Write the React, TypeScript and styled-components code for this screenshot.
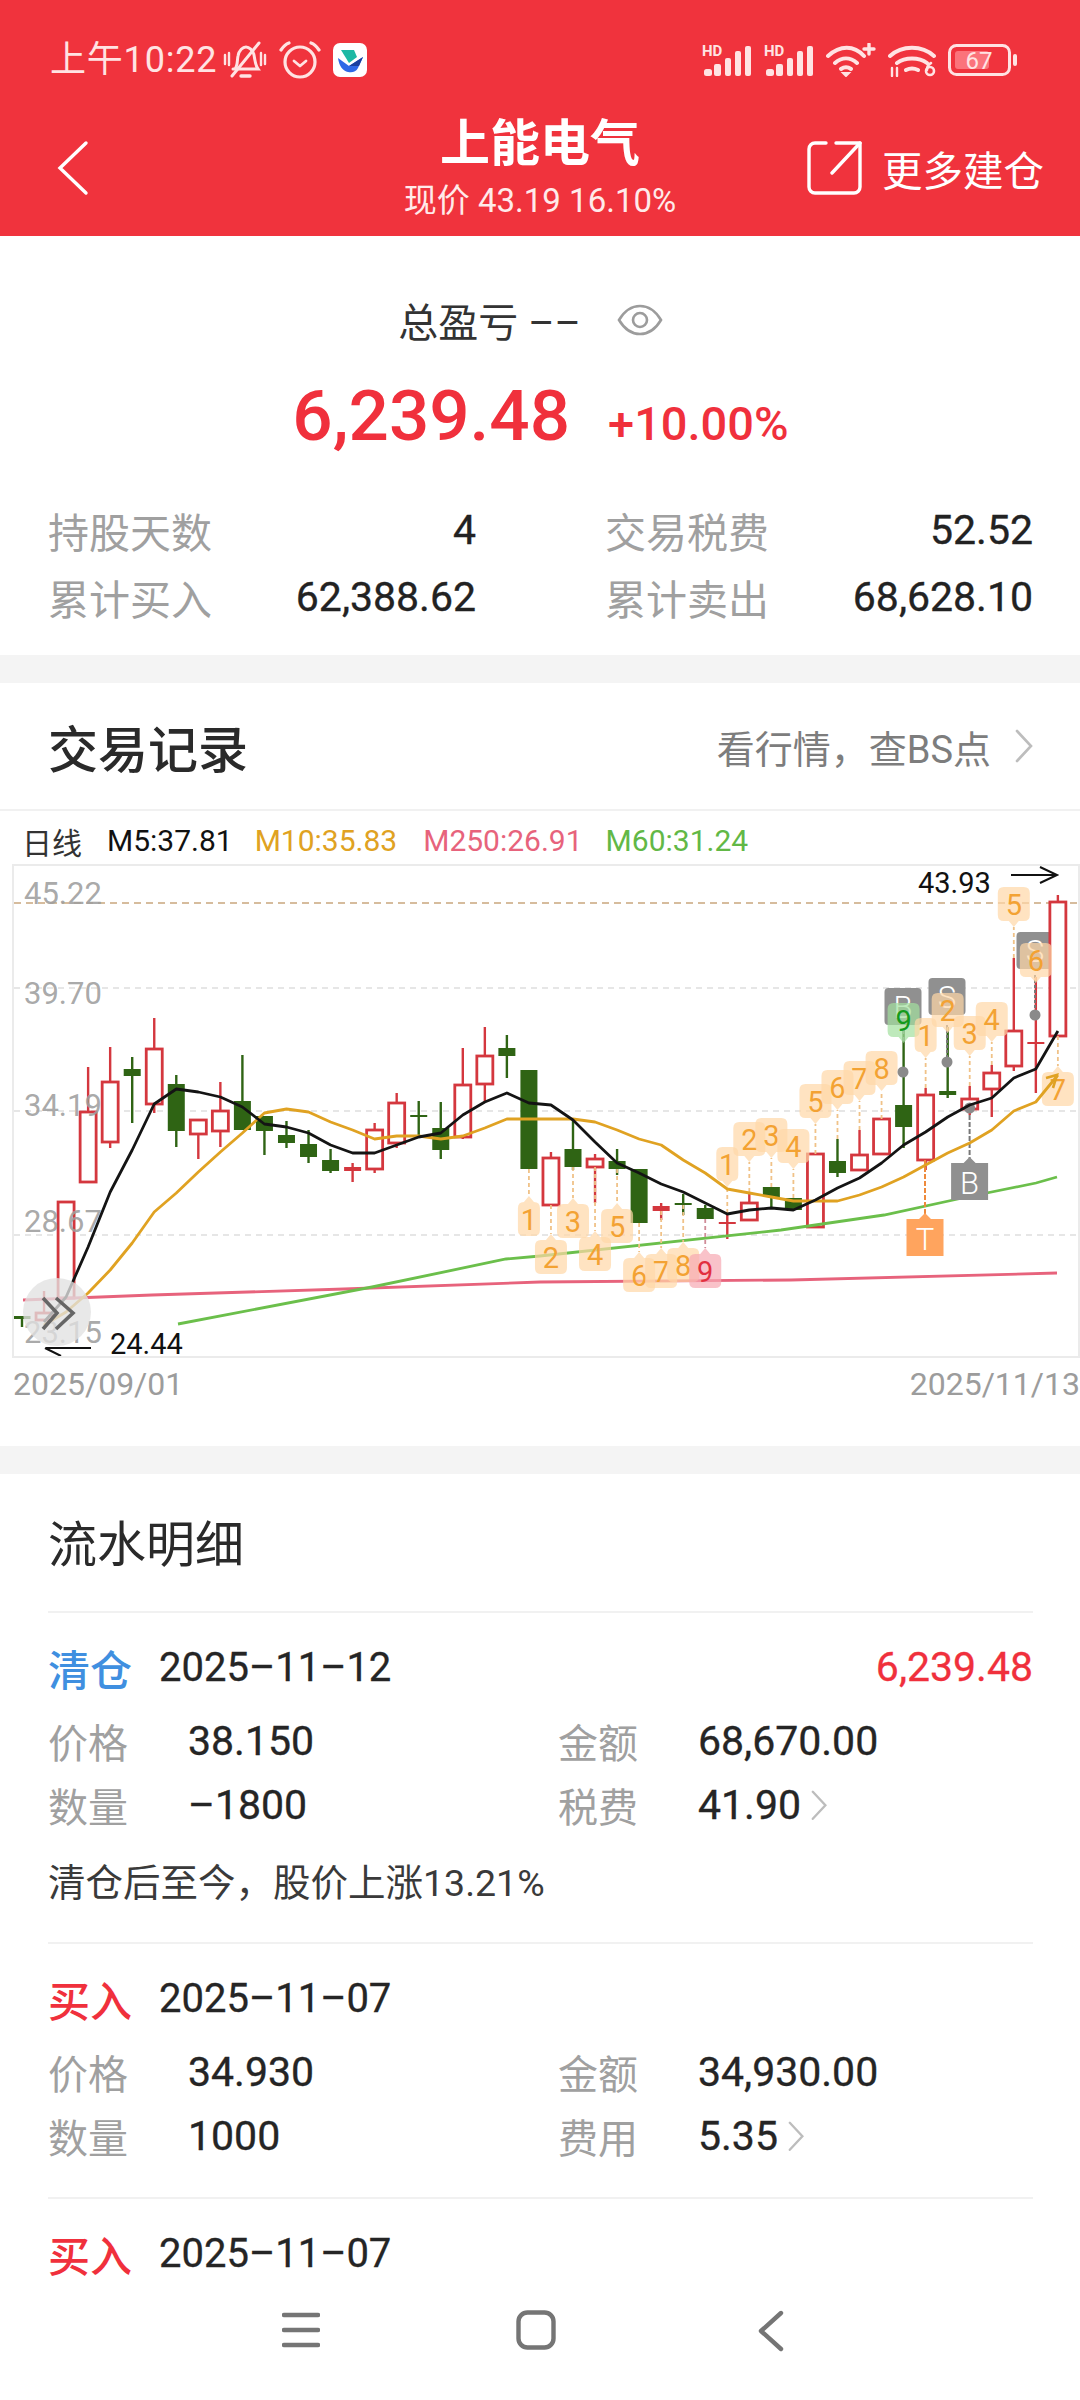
import styled, { createGlobalStyle } from "styled-components";

const GlobalStyle = createGlobalStyle`
  html, body {
    margin: 0;
    padding: 0;
    background: #fff;
  }
  body {
    font-family: Roboto, "Noto Sans CJK SC", sans-serif;
    color: #222;
  }
`;

const RED = "#f0303c";
const ICON = "#ffe3e3";

const Screen = styled.div`
  width: 1080px;
  height: 2400px;
  display: flex;
  flex-direction: column;
  overflow: hidden;
  background: #fff;
`;

const Scroll = styled.div`
  flex: 1;
  min-height: 0;
  overflow: hidden;
`;

const Header = styled.header`
  height: 236px;
  background: #f0333d;
  color: #fff;
`;

const StatusBar = styled.div`
  height: 80px;
  padding: 20px 62px 0 50px;
  display: flex;
  align-items: center;
  justify-content: space-between;
`;

const StatusGroup = styled.div<{ $gap?: number }>`
  display: flex;
  align-items: center;
  gap: ${(p) => p.$gap ?? 12}px;
`;

const Clock = styled.span`
  font-size: 36px;
  line-height: 40px;
  color: ${ICON};
  margin-right: -6px;
  letter-spacing: 0.8px;
`;

const TopNav = styled.div`
  height: 136px;
  display: grid;
  grid-template-columns: 1fr auto 1fr;
  align-items: center;
`;

const BackBox = styled.div`
  padding-left: 56px;
  display: flex;
`;

const TitleBlock = styled.div`
  text-align: center;
`;

const Title = styled.div`
  font-size: 50px;
  line-height: 58px;
  font-weight: 700;
`;

const SubTitle = styled.div`
  font-size: 33px;
  line-height: 40px;
  margin-top: 8px;
  color: #ffeaea;
`;

const MoreAction = styled.div`
  display: flex;
  justify-content: flex-end;
  align-items: center;
  gap: 20px;
  padding-right: 36px;
  font-size: 40.5px;
`;

const Summary = styled.section`
  padding: 59px 47px 25px 48px;
`;

const ProfitLine = styled.div`
  height: 50px;
  padding-right: 20px;
  display: flex;
  align-items: center;
  justify-content: center;
  gap: 36px;
  font-size: 40px;
  color: #333;
`;

const AmountLine = styled.div`
  margin-top: 35px;
  height: 72px;
  display: flex;
  align-items: baseline;
  justify-content: center;
  gap: 38px;
  color: ${RED};
`;

const Amount = styled.span`
  font-size: 71px;
  line-height: 72px;
  font-weight: 500;
`;

const Percent = styled.span`
  font-size: 47px;
  line-height: 72px;
  font-weight: 500;
`;

const StatGrid = styled.div`
  margin-top: 44px;
  display: grid;
  grid-template-columns: 428px 428px;
  column-gap: 129px;
  grid-auto-rows: 67px;
`;

const Stat = styled.div`
  display: flex;
  align-items: center;
  justify-content: space-between;
`;

const StatLabel = styled.span`
  font-size: 41px;
  color: #a0a0a0;
`;

const StatValue = styled.span`
  font-size: 41px;
  color: #222;
  -webkit-text-stroke: 0.35px #222;
`;

const Band = styled.div`
  height: 28px;
  background: #f4f4f4;
`;

const SectionHead = styled.div`
  height: 126px;
  padding: 0 47px 0 48px;
  display: flex;
  align-items: center;
  justify-content: space-between;
  border-bottom: 2px solid #f1f1f1;
`;

const SectionTitle = styled.h2`
  margin: 0;
  font-size: 50px;
  font-weight: 500;
  color: #2a2a2a;
`;

const SectionLink = styled.div`
  display: flex;
  align-items: center;
  gap: 24px;
  font-size: 38px;
  color: #7d7d7d;
`;

const Legend = styled.div`
  height: 47px;
  padding: 6px 0 0 22px;
  display: flex;
  align-items: center;
  font-size: 30px;
`;

const LegendItem = styled.span<{ $color: string; $gap: number }>`
  color: ${(p) => p.$color};
  margin-right: ${(p) => p.$gap}px;
`;

const ChartFrame = styled.div`
  width: 1064px;
  height: 490px;
  margin-left: 12px;
  border: 2px solid #ebebeb;
  overflow: hidden;
`;

const ChartSvg = styled.svg`
  display: block;
`;

const DateAxis = styled.div`
  height: 87px;
  padding: 1px 0 0 13px;
  display: flex;
  justify-content: space-between;
  font-size: 32px;
  line-height: 50px;
  color: #9c9c9c;
`;

const DetailHead = styled.div`
  margin: 0 47px 0 48px;
  height: 132px;
  padding-bottom: 5px;
  display: flex;
  align-items: center;
  border-bottom: 2px solid #f1f1f1;
`;

const DetailTitle = styled.h2`
  margin: 0;
  font-size: 49px;
  font-weight: 400;
  color: #2a2a2a;
`;

const Record = styled.div<{ $last?: boolean }>`
  margin: 0 47px 0 48px;
  padding: 29px 0 ${(p) => (p.$last ? 0 : 29)}px;
  border-bottom: ${(p) => (p.$last ? "none" : "2px solid #f1f1f1")};
`;

const RecordHead = styled.div`
  height: 50px;
  display: flex;
  align-items: center;
`;

const RecordType = styled.span<{ $color: string }>`
  width: 111px;
  font-size: 42px;
  font-weight: 500;
  color: ${(p) => p.$color};
`;

const RecordDate = styled.span`
  font-size: 40px;
  color: #252525;
  -webkit-text-stroke: 0.3px #252525;
`;

const RecordProfit = styled.span`
  margin-left: auto;
  font-size: 41px;
  color: ${RED};
  -webkit-text-stroke: 0.3px ${RED};
`;

const RecordRows = styled.div`
  margin-top: 17px;
  display: grid;
  grid-template-columns: 140px 370px 140px 1fr;
  grid-auto-rows: 64px;
  align-items: center;
`;

const RecordLabel = styled.span`
  font-size: 40px;
  color: #a0a0a0;
`;

const RecordValue = styled.span`
  display: flex;
  align-items: center;
  gap: 10px;
  font-size: 41px;
  color: #252525;
  -webkit-text-stroke: 0.35px #252525;
`;

const RecordNote = styled.div`
  margin: 21px 0 5px;
  font-size: 37.5px;
  line-height: 50px;
  color: #3a3a3a;
`;

const BottomNav = styled.nav`
  box-sizing: border-box;
  height: 115px;
  flex: none;
  background: #fff;
  padding: 25px 8px 0 0;
  display: flex;
  justify-content: center;
  align-items: flex-start;
`;

const NavSlot = styled.div`
  width: 235px;
  height: 40px;
  display: flex;
  justify-content: center;
`;

type Candle = [number, number, number, number, "r" | "g"];

// wick top, body top, body bottom, wick bottom, colour, one per trading day
const CANDLES: Candle[] = [
  [1316, 1316, 1319, 1327, "g"],
  [1291, 1313, 1320, 1320, "r"],
  [1202, 1202, 1298, 1298, "r"],
  [1067, 1112, 1182, 1182, "r"],
  [1047, 1082, 1142, 1148, "r"],
  [1057, 1069, 1076, 1123, "g"],
  [1018, 1049, 1104, 1113, "r"],
  [1075, 1084, 1131, 1147, "g"],
  [1120, 1120, 1134, 1159, "r"],
  [1082, 1111, 1131, 1147, "r"],
  [1055, 1101, 1130, 1130, "g"],
  [1116, 1116, 1131, 1155, "g"],
  [1121, 1135, 1143, 1148, "g"],
  [1130, 1144, 1157, 1163, "g"],
  [1149, 1160, 1171, 1173, "g"],
  [1163, 1167, 1171, 1182, "r"],
  [1123, 1130, 1169, 1173, "r"],
  [1093, 1103, 1143, 1148, "r"],
  [1101, 1115, 1117, 1138, "g"],
  [1102, 1128, 1150, 1159, "g"],
  [1048, 1085, 1137, 1139, "r"],
  [1027, 1056, 1084, 1103, "r"],
  [1035, 1048, 1056, 1078, "g"],
  [1070, 1070, 1169, 1169, "g"],
  [1152, 1158, 1205, 1205, "r"],
  [1118, 1149, 1167, 1170, "g"],
  [1154, 1159, 1167, 1203, "r"],
  [1149, 1161, 1169, 1175, "g"],
  [1169, 1169, 1223, 1223, "g"],
  [1203, 1206, 1211, 1220, "r"],
  [1194, 1203, 1205, 1215, "g"],
  [1205, 1208, 1219, 1219, "g"],
  [1213, 1222, 1224, 1239, "r"],
  [1192, 1203, 1220, 1220, "r"],
  [1187, 1187, 1197, 1208, "g"],
  [1198, 1198, 1210, 1210, "g"],
  [1154, 1154, 1227, 1227, "r"],
  [1139, 1161, 1173, 1177, "g"],
  [1130, 1155, 1170, 1170, "r"],
  [1119, 1119, 1154, 1154, "r"],
  [1030, 1105, 1127, 1148, "g"],
  [1088, 1095, 1160, 1170, "r"],
  [1027, 1091, 1095, 1098, "g"],
  [1086, 1099, 1109, 1115, "r"],
  [1065, 1073, 1089, 1117, "r"],
  [958, 1031, 1066, 1071, "r"],
  [977, 1042, 1044, 1093, "r"],
  [895, 902, 1036, 1036, "r"],
];

const MA5 = [
  1322, 1297, 1247, 1192, 1150, 1104, 1089, 1092, 1097, 1107, 1124, 1127, 1133, 1145, 1153, 1153, 1145,
  1137, 1133, 1115, 1102, 1093, 1103, 1105, 1120, 1142, 1163, 1173, 1184, 1192, 1203, 1214, 1210, 1208,
  1210, 1200, 1188, 1178, 1163, 1145, 1132, 1117, 1105, 1098, 1078, 1069, 1031,
];

const MA10 = [
  1325, 1312, 1293, 1270, 1243, 1212, 1193, 1172, 1152, 1133, 1113, 1109, 1112, 1122, 1130, 1139, 1136,
  1136, 1139, 1136, 1128, 1119, 1119, 1119, 1119, 1122, 1130, 1139, 1145, 1160, 1173, 1189, 1193, 1197,
  1201, 1201, 1201, 1195, 1187, 1177, 1165, 1153, 1143, 1130, 1111, 1102, 1075,
];

const slotX = (i: number) => 22 + 22.04 * i;
const toLine = (ys: number[]) => ys.map((y, i) => `${slotX(i + 1).toFixed(1)},${y}`).join(" ");

const MA250 = "23,1300 152,1295 344,1289 540,1282 791,1280 1057,1273";
const MA60 = "178,1324 372,1287 506,1259 540,1256 781,1230 884,1215 967,1197 1036,1183 1057,1177";

type Pin = { slot: number; y: number; label: string; up?: boolean; narrow?: boolean; tone?: "green" | "red" };

const PINS: Pin[] = [
  { slot: 23, y: 1219, label: "1", up: true, narrow: true },
  { slot: 24, y: 1257, label: "2", up: true },
  { slot: 25, y: 1221, label: "3", up: true },
  { slot: 26, y: 1254, label: "4", up: true },
  { slot: 27, y: 1226, label: "5", up: true },
  { slot: 28, y: 1275, label: "6", up: true },
  { slot: 29, y: 1271, label: "7", up: true },
  { slot: 30, y: 1265, label: "8", up: true },
  { slot: 31, y: 1271, label: "9", up: true, tone: "red" },
  { slot: 32, y: 1164, label: "1", narrow: true },
  { slot: 33, y: 1139, label: "2" },
  { slot: 34, y: 1135, label: "3" },
  { slot: 35, y: 1146, label: "4" },
  { slot: 36, y: 1101, label: "5" },
  { slot: 37, y: 1087, label: "6" },
  { slot: 38, y: 1078, label: "7" },
  { slot: 39, y: 1068, label: "8" },
  { slot: 40, y: 1020, label: "9", tone: "green" },
  { slot: 41, y: 1035, label: "1", narrow: true },
  { slot: 42, y: 1010, label: "2" },
  { slot: 43, y: 1033, label: "3" },
  { slot: 44, y: 1019, label: "4" },
  { slot: 45, y: 904, label: "5" },
  { slot: 46, y: 960, label: "6" },
  { slot: 47, y: 1089, label: "7", up: true },
];

const PIN_TONES = {
  orange: { fill: "#ffd7a6", text: "#f3a233", line: "#f0c288" },
  green: { fill: "#a3e09e", text: "#149a1c", line: "#8a8a8a" },
  red: { fill: "#f6a8b2", text: "#e2303f", line: "#cf8c98" },
};

const pinPath = (x: number, y: number, w: number, up?: boolean) => {
  const l = x - w / 2;
  const r = x + w / 2;
  const t = y - 17;
  const b = y + 17;
  return up
    ? `M${l + 6} ${t}L${x - 5} ${t}L${x} ${t - 6}L${x + 5} ${t}L${r - 6} ${t}Q${r} ${t} ${r} ${t + 6}L${r} ${b - 6}Q${r} ${b} ${r - 6} ${b}L${l + 6} ${b}Q${l} ${b} ${l} ${b - 6}L${l} ${t + 6}Q${l} ${t} ${l + 6} ${t}Z`
    : `M${l + 6} ${t}L${r - 6} ${t}Q${r} ${t} ${r} ${t + 6}L${r} ${b - 6}Q${r} ${b} ${r - 6} ${b}L${x + 5} ${b}L${x} ${b + 6}L${x - 5} ${b}L${l + 6} ${b}Q${l} ${b} ${l} ${b - 6}L${l} ${t + 6}Q${l} ${t} ${l + 6} ${t}Z`;
};

function CandleMark({ candle, slot }: { candle: Candle; slot: number }) {
  const [high, top, bottom, low, kind] = candle;
  const x = slotX(slot);
  const color = kind === "r" ? "#d4373e" : "#2f6414";
  const thin = bottom - top < 6;
  return (
    <g>
      <line x1={x} x2={x} y1={high} y2={low} stroke={color} strokeWidth={2.4} />
      {kind === "g" || thin ? (
        <rect x={x - 8.5} y={top} width={17} height={bottom - top} fill={color} />
      ) : (
        <rect x={x - 8} y={top} width={16} height={bottom - top} fill="#fff" stroke={color} strokeWidth={2.8} />
      )}
    </g>
  );
}

function PinMark({ pin }: { pin: Pin }) {
  const x = slotX(pin.slot);
  const tone = PIN_TONES[pin.tone ?? "orange"];
  const candle = CANDLES[pin.slot];
  const from = pin.up ? candle[2] : candle[0];
  const to = pin.up ? pin.y - 23 : pin.y + 23;
  return (
    <g>
      <line x1={x} x2={x} y1={from} y2={to} stroke={tone.line} strokeWidth={1.8} strokeDasharray="4 3" />
      <path d={pinPath(x, pin.y, pin.narrow ? 22 : 32, pin.up)} fill={tone.fill} fillOpacity={0.7} />
      <text x={x} y={pin.y + 11} textAnchor="middle" fontSize={29} fill={tone.text} fontFamily="Roboto, sans-serif">
        {pin.label}
      </text>
    </g>
  );
}

function TagMark({ x, y, label, fill }: { x: number; y: number; label: string; fill: string }) {
  return (
    <g>
      <rect x={x - 18.5} y={y} width={37} height={37} rx={4} fill={fill} />
      <text x={x} y={y + 30} textAnchor="middle" fontSize={31} fontWeight={300} fill="#fff" fontFamily="Roboto, sans-serif">
        {label}
      </text>
    </g>
  );
}

function KLineChart() {
  const axis = [
    ["45.22", 904],
    ["39.70", 1004],
    ["34.19", 1116],
    ["28.67", 1232],
    ["23.15", 1343],
  ] as const;
  return (
    <ChartFrame>
      <ChartSvg width={1064} height={490} viewBox="14 866 1064 490">
        {[988, 1111, 1235].map((y) => (
          <line key={y} x1={14} x2={1078} y1={y} y2={y} stroke="#dedede" strokeWidth={1.5} strokeDasharray="6 5" />
        ))}
        <line x1={14} x2={1078} y1={903} y2={903} stroke="#c9a77d" strokeWidth={1.5} strokeDasharray="7 5" />

        <TagMark x={903} y={988} label="B" fill="#909090" />
        <TagMark x={947} y={978} label="S" fill="#909090" />
        <TagMark x={1035} y={932} label="S" fill="#909090" />

        {CANDLES.map((candle, i) => (
          <CandleMark key={i} candle={candle} slot={i} />
        ))}

        {axis.map(([label, y]) => (
          <text key={label} x={24} y={y} fontSize={31} fill="#9e9e9e" fillOpacity={0.9} fontFamily="Roboto, sans-serif">
            {label}
          </text>
        ))}

        <polyline points={MA250} fill="none" stroke="#e7637c" strokeWidth={2.8} />
        <polyline points={MA60} fill="none" stroke="#6bbf4b" strokeWidth={2.8} />

        <line x1={947} x2={947} y1={1025} y2={1062} stroke="#777" strokeWidth={2} strokeDasharray="3 2" />
        <line x1={1035} x2={1035} y1={975} y2={1015} stroke="#777" strokeWidth={2} strokeDasharray="3 2" />
        <line x1={969.6} x2={969.6} y1={1108} y2={1160} stroke="#777" strokeWidth={2} strokeDasharray="5 2" />
        <line x1={925} x2={925} y1={1160} y2={1216} stroke="#ee8a3c" strokeWidth={2} strokeDasharray="5 2" />

        {PINS.map((pin) => (
          <PinMark key={`${pin.slot}${pin.label}`} pin={pin} />
        ))}

        <circle cx={903} cy={1072} r={5.5} fill="#8a8a8a" />
        <circle cx={947} cy={1062} r={5.5} fill="#8a8a8a" />
        <circle cx={1035} cy={1015} r={5.5} fill="#8a8a8a" />
        <circle cx={969.6} cy={1108} r={5.5} fill="#8a8a8a" />

        <path d="M969.6 1157l6 6h12.5v37h-37v-37h12.5z" fill="#909090" />
        <text x={969.6} y={1194} textAnchor="middle" fontSize={31} fontWeight={300} fill="#fff" fontFamily="Roboto, sans-serif">
          B
        </text>
        <path d="M925 1213l6 6h12.5v37h-37v-37h12.5z" fill="#ffa45e" />
        <text x={925} y={1250} textAnchor="middle" fontSize={31} fontWeight={300} fill="#fff" fontFamily="Roboto, sans-serif">
          T
        </text>

        <polyline points={toLine(MA10)} fill="none" stroke="#e0a222" strokeWidth={2.8} strokeLinejoin="round" />
        <path d="M1046 1078L1057 1075L1053 1088" fill="none" stroke="#e0a222" strokeWidth={2.6} />
        <polyline points={toLine(MA5)} fill="none" stroke="#141414" strokeWidth={2.8} strokeLinejoin="round" />

        <text x={918} y={893} fontSize={29} fill="#111" fontFamily="Roboto, sans-serif">
          43.93
        </text>
        <path d="M1011 875H1056M1040 867L1057 875L1040 883" fill="none" stroke="#111" strokeWidth={2} />
        <text x={110} y={1354} fontSize={29} fill="#111" fontFamily="Roboto, sans-serif">
          24.44
        </text>
        <path d="M91 1348H46M61 1356L45 1348" fill="none" stroke="#111" strokeWidth={2} />

        <circle cx={57} cy={1312} r={34} fill="#e2e2e2" fillOpacity={0.78} />
        <path d="M43 1298L57 1313L43 1329M56 1298L73 1313L56 1329" fill="none" stroke="#666" strokeWidth={3.6} />
      </ChartSvg>
    </ChartFrame>
  );
}

function MutedBell() {
  return (
    <svg width={44} height={40} viewBox="0 0 44 40" fill="none" stroke={ICON} strokeWidth={3} strokeLinecap="round">
      <path d="M12 29c3-4 2-9 3-13 1-6 5-9 8-9s7 3 8 8c1 5 1 10 4 14H10" />
      <path d="M9 36L36 3" />
      <path d="M2 15v9M6 13v12M38 13v12M42 15v9" strokeWidth={2.4} />
      <path d="M18 36h9" strokeWidth={3.4} />
    </svg>
  );
}

function AlarmClock() {
  return (
    <svg width={42} height={38} viewBox="0 0 42 38" fill="none" stroke={ICON} strokeWidth={3.2} strokeLinecap="round" strokeLinejoin="round">
      <circle cx={21} cy={21} r={15} />
      <path d="M2 9c2-3 5-6 8-7M40 9c-2-3-5-6-8-7" />
      <path d="M15 20l6 5 6-5" strokeWidth={2.8} />
    </svg>
  );
}

function AppBadge() {
  return (
    <svg width={34} height={34} viewBox="0 0 34 34">
      <rect width={34} height={34} rx={7} fill="#fff" />
      <path d="M8 7h13l3 7-8 6z" fill="#1db8a4" />
      <path d="M5 15l11 8 14-9-5 11c-2 4-6 5-10 4-5-1-9-6-10-14z" fill="#2f68e6" />
      <path d="M16 23l14-9-4 9z" fill="#1b3f9e" />
    </svg>
  );
}

function SignalBars() {
  return (
    <svg width={50} height={34} viewBox="0 0 50 34" fill={ICON}>
      <text x={0} y={13} fontSize={15} fontWeight={700} fill={ICON} fontFamily="Roboto, sans-serif">
        HD
      </text>
      <rect x={2} y={26} width={8} height={7} rx={2.5} />
      <rect x={12} y={21} width={7} height={12} rx={2} />
      <rect x={23} y={15} width={6} height={18} rx={2} />
      <rect x={33} y={8} width={6} height={25} rx={2} />
      <rect x={43} y={3} width={6} height={30} rx={2} />
    </svg>
  );
}

function WifiPlus() {
  return (
    <svg width={50} height={34} viewBox="0 0 50 34" fill="none" stroke={ICON} strokeWidth={4} strokeLinecap="round">
      <path d="M2 13c12-11 26-11 36 0M9 20c7-6 15-6 22 0M15 26c3-2 7-2 10 0" />
      <path d="M20 33l-3-3h6z" fill={ICON} strokeWidth={2} />
      <path d="M38 6h10M43 1v10" strokeWidth={3.4} />
    </svg>
  );
}

function WifiSix() {
  return (
    <svg width={48} height={34} viewBox="0 0 48 34" fill="none" stroke={ICON} strokeWidth={4} strokeLinecap="round">
      <path d="M2 13c12-11 32-11 44 0M9 20c8-6 22-6 30 0M18 27c4-2 8-2 12 0" />
      <path d="M4 25v8M9 25v8" strokeWidth={2.4} />
      <circle cx={42} cy={28} r={4} strokeWidth={2.6} />
      <path d="M39 27c0-4 2-6 4-7" strokeWidth={2.6} />
    </svg>
  );
}

function Battery() {
  return (
    <svg width={70} height={32} viewBox="0 0 70 32">
      <rect x={1.5} y={1.5} width={60} height={29} rx={7} fill="none" stroke={ICON} strokeWidth={3} />
      <rect x={7} y={7} width={34} height={18} rx={3} fill="#ff8a90" fillOpacity={0.75} />
      <rect x={65} y={10} width={4} height={12} rx={2} fill={ICON} />
      <text x={31} y={25} textAnchor="middle" fontSize={24} fill={ICON} fontFamily="Roboto, sans-serif">
        67
      </text>
    </svg>
  );
}

function BackArrow() {
  return (
    <svg width={34} height={56} viewBox="0 0 34 56" fill="none" stroke="#fff" strokeWidth={3.4} strokeLinecap="round">
      <path d="M30 3L4 28L30 53" />
    </svg>
  );
}

function ShareBox() {
  return (
    <svg width={56} height={56} viewBox="806 145 56 56" fill="none" stroke="#fff" strokeWidth={3.4} strokeLinecap="round" strokeLinejoin="round">
      <path d="M826 148H815a6 6 0 0 0-6 6V192a6 6 0 0 0 6 6H854a6 6 0 0 0 6-6V148H836" />
      <path d="M860 148L832 178" />
    </svg>
  );
}

function EyeIcon() {
  return (
    <svg width={46} height={32} viewBox="0 0 46 32" fill="none" stroke="#9c9c9c" strokeWidth={2.6}>
      <path d="M2 16C8 6 15 2 23 2s15 4 21 14c-6 10-13 14-21 14S8 26 2 16z" />
      <circle cx={23} cy={16} r={7} />
    </svg>
  );
}

function Chevron({ size = 1, color = "#bdbdbd" }: { size?: number; color?: string }) {
  return (
    <svg width={18 * size} height={34 * size} viewBox="0 0 18 34" fill="none" stroke={color} strokeWidth={2.6} strokeLinecap="round">
      <path d="M2 2L16 17L2 32" />
    </svg>
  );
}

export default function App() {
  return (
    <Screen>
      <GlobalStyle />
      <Scroll>
        <Header>
          <StatusBar>
            <StatusGroup $gap={12}>
              <Clock>上午10:22</Clock>
              <MutedBell />
              <AlarmClock />
              <AppBadge />
            </StatusGroup>
            <StatusGroup>
              <SignalBars />
              <SignalBars />
              <WifiPlus />
              <WifiSix />
              <Battery />
            </StatusGroup>
          </StatusBar>
          <TopNav>
            <BackBox>
              <BackArrow />
            </BackBox>
            <TitleBlock>
              <Title>上能电气</Title>
              <SubTitle>现价 43.19 16.10%</SubTitle>
            </TitleBlock>
            <MoreAction>
              <ShareBox />
              更多建仓
            </MoreAction>
          </TopNav>
        </Header>

        <Summary>
          <ProfitLine>
            <span>总盈亏 ––</span>
            <EyeIcon />
          </ProfitLine>
          <AmountLine>
            <Amount>6,239.48</Amount>
            <Percent>+10.00%</Percent>
          </AmountLine>
          <StatGrid>
            <Stat>
              <StatLabel>持股天数</StatLabel>
              <StatValue>4</StatValue>
            </Stat>
            <Stat>
              <StatLabel>交易税费</StatLabel>
              <StatValue>52.52</StatValue>
            </Stat>
            <Stat>
              <StatLabel>累计买入</StatLabel>
              <StatValue>62,388.62</StatValue>
            </Stat>
            <Stat>
              <StatLabel>累计卖出</StatLabel>
              <StatValue>68,628.10</StatValue>
            </Stat>
          </StatGrid>
        </Summary>

        <Band />

        <SectionHead>
          <SectionTitle>交易记录</SectionTitle>
          <SectionLink>
            看行情，查BS点
            <Chevron />
          </SectionLink>
        </SectionHead>

        <Legend>
          <LegendItem $color="#333" $gap={25}>日线</LegendItem>
          <LegendItem $color="#111" $gap={22}>M5:37.81</LegendItem>
          <LegendItem $color="#e0a222" $gap={26}>M10:35.83</LegendItem>
          <LegendItem $color="#e7637c" $gap={23}>M250:26.91</LegendItem>
          <LegendItem $color="#62b846" $gap={0}>M60:31.24</LegendItem>
        </Legend>

        <KLineChart />

        <DateAxis>
          <span>2025/09/01</span>
          <span>2025/11/13</span>
        </DateAxis>

        <Band />

        <DetailHead>
          <DetailTitle>流水明细</DetailTitle>
        </DetailHead>

        <Record>
          <RecordHead>
            <RecordType $color="#3f8fe0">清仓</RecordType>
            <RecordDate>2025–11–12</RecordDate>
            <RecordProfit>6,239.48</RecordProfit>
          </RecordHead>
          <RecordRows>
            <RecordLabel>价格</RecordLabel>
            <RecordValue>38.150</RecordValue>
            <RecordLabel>金额</RecordLabel>
            <RecordValue>68,670.00</RecordValue>
            <RecordLabel>数量</RecordLabel>
            <RecordValue>–1800</RecordValue>
            <RecordLabel>税费</RecordLabel>
            <RecordValue>
              41.90
              <Chevron size={0.9} />
            </RecordValue>
          </RecordRows>
          <RecordNote>清仓后至今，股价上涨13.21%</RecordNote>
        </Record>

        <Record>
          <RecordHead>
            <RecordType $color={RED}>买入</RecordType>
            <RecordDate>2025–11–07</RecordDate>
          </RecordHead>
          <RecordRows>
            <RecordLabel>价格</RecordLabel>
            <RecordValue>34.930</RecordValue>
            <RecordLabel>金额</RecordLabel>
            <RecordValue>34,930.00</RecordValue>
            <RecordLabel>数量</RecordLabel>
            <RecordValue>1000</RecordValue>
            <RecordLabel>费用</RecordLabel>
            <RecordValue>
              5.35
              <Chevron size={0.9} />
            </RecordValue>
          </RecordRows>
        </Record>

        <Record $last>
          <RecordHead>
            <RecordType $color={RED}>买入</RecordType>
            <RecordDate>2025–11–07</RecordDate>
          </RecordHead>
        </Record>
      </Scroll>

      <BottomNav>
        <NavSlot>
          <svg width={38} height={40} viewBox="0 0 38 40" fill="none" stroke="#757575" strokeWidth={4.4} strokeLinecap="round">
            <path d="M2 5H36M2 20H36M2 35H36" />
          </svg>
        </NavSlot>
        <NavSlot>
          <svg width={40} height={40} viewBox="0 0 40 40" fill="none" stroke="#757575" strokeWidth={4.4}>
            <rect x={2.5} y={2.5} width={35} height={35} rx={9} />
          </svg>
        </NavSlot>
        <NavSlot>
          <svg width={28} height={42} viewBox="0 0 28 42" fill="none" stroke="#757575" strokeWidth={4.4} strokeLinecap="round" strokeLinejoin="round">
            <path d="M24 3L4 21L24 39" />
          </svg>
        </NavSlot>
      </BottomNav>
    </Screen>
  );
}
